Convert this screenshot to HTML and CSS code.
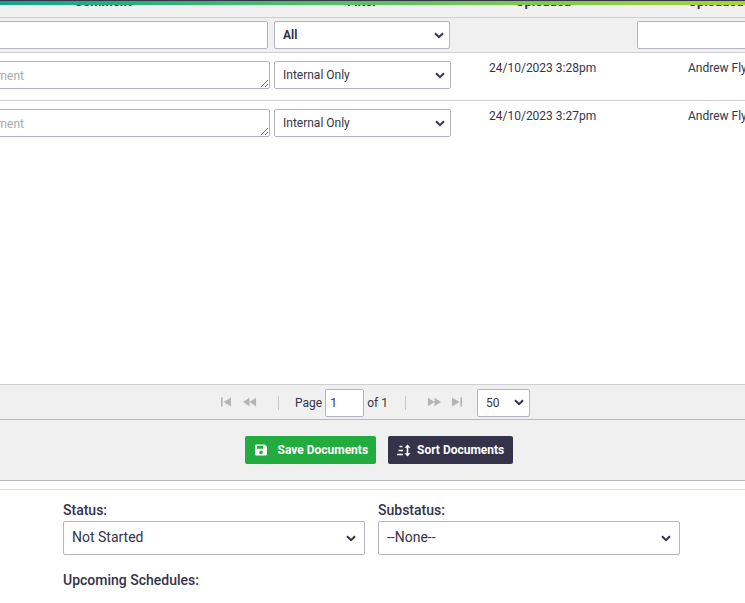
FILE: index.html
```html
<!DOCTYPE html>
<html lang="en">
<head>
<meta charset="utf-8">
<title>Documents</title>
<link rel="stylesheet" href="styles.css">
</head>
<body>
<div class="accent"></div>
<section class="docs">
  <div class="row head">
    <div class="c-comment">Comment</div>
    <div class="c-filter">Filter</div>
    <div class="c-date">Uploaded</div>
    <div class="c-user">Uploaded By</div>
  </div>
  <div class="row filters">
    <div class="c-comment"><input class="field filter-input" type="text"></div>
    <div class="c-filter"><select class="field select-strong"><option>All</option></select></div>
    <div class="c-date"></div>
    <div class="c-user"><input class="field user-input" type="text"></div>
  </div>
  <div class="row item">
    <div class="c-comment"><textarea class="field note" placeholder="Add a comment"></textarea></div>
    <div class="c-filter"><select class="field select-row"><option>Internal Only</option></select></div>
    <div class="c-date cell-text">24/10/2023 3:28pm</div>
    <div class="c-user cell-text">Andrew Flynn</div>
  </div>
  <div class="row item last">
    <div class="c-comment"><textarea class="field note" placeholder="Add a comment"></textarea></div>
    <div class="c-filter"><select class="field select-row"><option>Internal Only</option></select></div>
    <div class="c-date cell-text">24/10/2023 3:27pm</div>
    <div class="c-user cell-text">Andrew Flynn</div>
  </div>
</section>
<nav class="pager">
  <svg class="pg-icon first" viewBox="0 0 12 12"><path d="M1 1.500h1.600v9H1zM11 1.500v9L3.500 6z"/></svg>
  <svg class="pg-icon wide" viewBox="0 0 16 12"><path d="M8 1.500v9L1 6zM15 1.500v9L8 6z"/></svg>
  <span class="pg-sep"></span>
  <span class="pg-label">Page</span>
  <input class="field pg-input" type="text" value="1">
  <span class="pg-of">of 1</span>
  <span class="pg-sep second"></span>
  <svg class="pg-icon wide next" viewBox="0 0 16 12"><path d="M1 1.500v9L8 6zM8 1.500v9L15 6z"/></svg>
  <svg class="pg-icon" viewBox="0 0 12 12"><path d="M1 1.500v9L8.500 6zM9.400 1.500H11v9H9.400z"/></svg>
  <select class="field pg-size"><option>50</option></select>
</nav>
<div class="actions">
  <button class="btn save" type="button">
    <svg class="btn-icon" viewBox="0 1 13 12"><path fill-rule="evenodd" d="M1.500 1H10.500L13 3.500V11.500A1.500 1.500 0 0 1 11.500 13H1.500A1.500 1.500 0 0 1 0 11.500V2.500A1.500 1.500 0 0 1 1.500 1ZM2.200 2.800V5.600H9V2.800ZM6.500 7.500A2 2 0 1 0 6.500 11.500A2 2 0 1 0 6.500 7.500Z"/></svg>
    <span>Save Documents</span>
  </button>
  <button class="btn sort" type="button">
    <svg class="btn-icon" viewBox="0 0 14 12"><path d="M2.500 1.200h3v1.600h-3zM1.500 5.200h4.500v1.600H1.500zM0 9.200h6v1.600H0zM10.500 0L13.500 3.200H11.300V8.800H13.500L10.500 12L7.500 8.800H9.700V3.200H7.500Z"/></svg>
    <span>Sort Documents</span>
  </button>
</div>
<div class="spacer"></div>
<form class="status">
  <div class="status-col">
    <label class="status-label">Status:</label>
    <select class="field select-big"><option>Not Started</option></select>
  </div>
  <div class="status-col">
    <label class="status-label">Substatus:</label>
    <select class="field select-big"><option>--None--</option></select>
  </div>
  <div class="upcoming">Upcoming Schedules:</div>
</form>
</body>
</html>
```
FILE: styles.css
```css
* { box-sizing: border-box; }
html, body { height: 603px; overflow: hidden; }
body {
  margin: 0;
  position: relative;
  background: #fff;
  color: #35334a;
  font-family: Roboto, "Liberation Sans", sans-serif;
  font-size: 12px;
}
.accent {
  position: absolute;
  top: 0; left: 0; right: 0;
  height: 5px;
  background: linear-gradient(90deg, #0fa58c 0%, #4dbd68 40%, #a9d334 100%);
  border-top: 1px solid #35334a;
}
.docs { height: 384px; overflow: hidden; }
.row {
  display: grid;
  grid-template-columns: 342px 176px 187px 176px;
  width: 881px;
  margin-left: -68px;
}
.head {
  height: 18px;
  background: #f0f0f0;
  border-bottom: 1px solid #cfcfcf;
  font-weight: 700;
  font-size: 13px;
  line-height: 3px;
  text-align: center;
  align-items: start;
}
.filters {
  height: 35px;
  background: #f0f0f0;
  border-bottom: 1px solid #cfcfcf;
  padding-top: 3px;
}
.item {
  height: 48px;
  padding-top: 8px;
  border-bottom: 1px solid #cfcfcf;
}
.item.last { border-bottom: 0; }
.field {
  display: block;
  background: #fff;
  border: 1px solid #b5b3c1;
  border-radius: 2px;
  color: #35334a;
  font-family: inherit;
  outline: 0;
  margin: 0;
}
select.field {
  appearance: none;
  background-image: url("data:image/svg+xml,%3Csvg xmlns='http://www.w3.org/2000/svg' viewBox='0 0 10 7'%3E%3Cpath d='M1 1.200L5 5.200L9 1.200' fill='none' stroke='%2335334a' stroke-width='2'/%3E%3C/svg%3E");
  background-repeat: no-repeat;
  background-size: 10px 7px;
}
.filter-input { width: 336px; height: 28px; }
.user-input { width: 176px; height: 28px; }
.select-strong {
  width: 176px; height: 28px;
  padding-left: 8px;
  font-weight: 700;
  font-size: 12px;
  background-position: right 5px center;
}
.note {
  width: 338px; height: 28px;
  padding: 7px 6px 5px;
  font-size: 12px;
  resize: both;
}
.note::placeholder { color: #a9a9a9; }
.select-row {
  width: 177px; height: 28px;
  padding-left: 8px;
  font-size: 12px;
  background-position: right 5px center;
}
.cell-text { padding-left: 39px; font-size: 12px; line-height: 15px; white-space: nowrap; }
.c-user.cell-text { padding-left: 51px; }
.pager {
  height: 36px;
  background: #f0f0f0;
  border-top: 1px solid #cfcfcf;
  border-bottom: 1px solid #b9b9c0;
  display: flex;
  align-items: center;
  padding: 1px 0 0 220px;
  font-size: 12px;
}
.pg-icon { width: 12px; height: 12px; fill: #b4b4b4; margin-right: 6px; margin-top: -1px; flex: none; }
.pg-icon.first { margin-right: 10px; }
.pg-icon.wide { width: 15px; }
.pg-icon.next { margin-right: 9px; }
.pg-sep { width: 1px; height: 14px; background: #c8c8c8; margin: 0 16px 0 15px; flex: none; }
.pg-sep.second { margin: 0 21px 0 17px; }
.pg-label { margin-right: 3px; }
.pg-input { width: 39px; height: 28px; padding: 0 4px; font-size: 12px; }
.pg-of { margin-left: 3px; }
.pg-size {
  width: 53px; height: 28px;
  margin-left: 8px;
  padding-left: 8px;
  font-size: 12px;
  background-position: right 5px center;
}
.actions {
  height: 61px;
  background: #f0f0f0;
  border-bottom: 1px solid #b9b9c0;
  display: flex;
  align-items: flex-start;
  padding: 16px 0 0 245px;
  gap: 12px;
}
.btn {
  height: 28px;
  border: 0;
  border-radius: 2px;
  color: #fff;
  font-family: inherit;
  font-weight: 700;
  font-size: 12px;
  white-space: nowrap;
  display: flex;
  align-items: center;
  margin: 0;
  padding: 0 0 0 10px;
}
.save { width: 131px; background: #22ac40; }
.sort { width: 125px; background: #35334a; padding-left: 9px; }
.btn-icon { fill: #fff; width: 12px; height: 12px; margin-right: 10.500px; flex: none; }
.sort .btn-icon { width: 14px; height: 13px; margin-right: 6px; }
.spacer { height: 9px; border-bottom: 1px solid #dcdcdc; }
.status {
  display: grid;
  grid-template-columns: 302px 302px;
  column-gap: 13px;
  padding: 10px 0 0 63px;
}
.status-label { display: block; font-size: 14px; font-weight: 500; line-height: 20px; margin-bottom: 1px; }
.select-big {
  width: 302px; height: 34px;
  padding: 0 0 2px 8px;
  font-size: 14px;
  background-position: right 8px center;
}
.upcoming { grid-column: 1 / 3; margin-top: 15px; font-size: 14px; font-weight: 500; line-height: 20px; }
```
